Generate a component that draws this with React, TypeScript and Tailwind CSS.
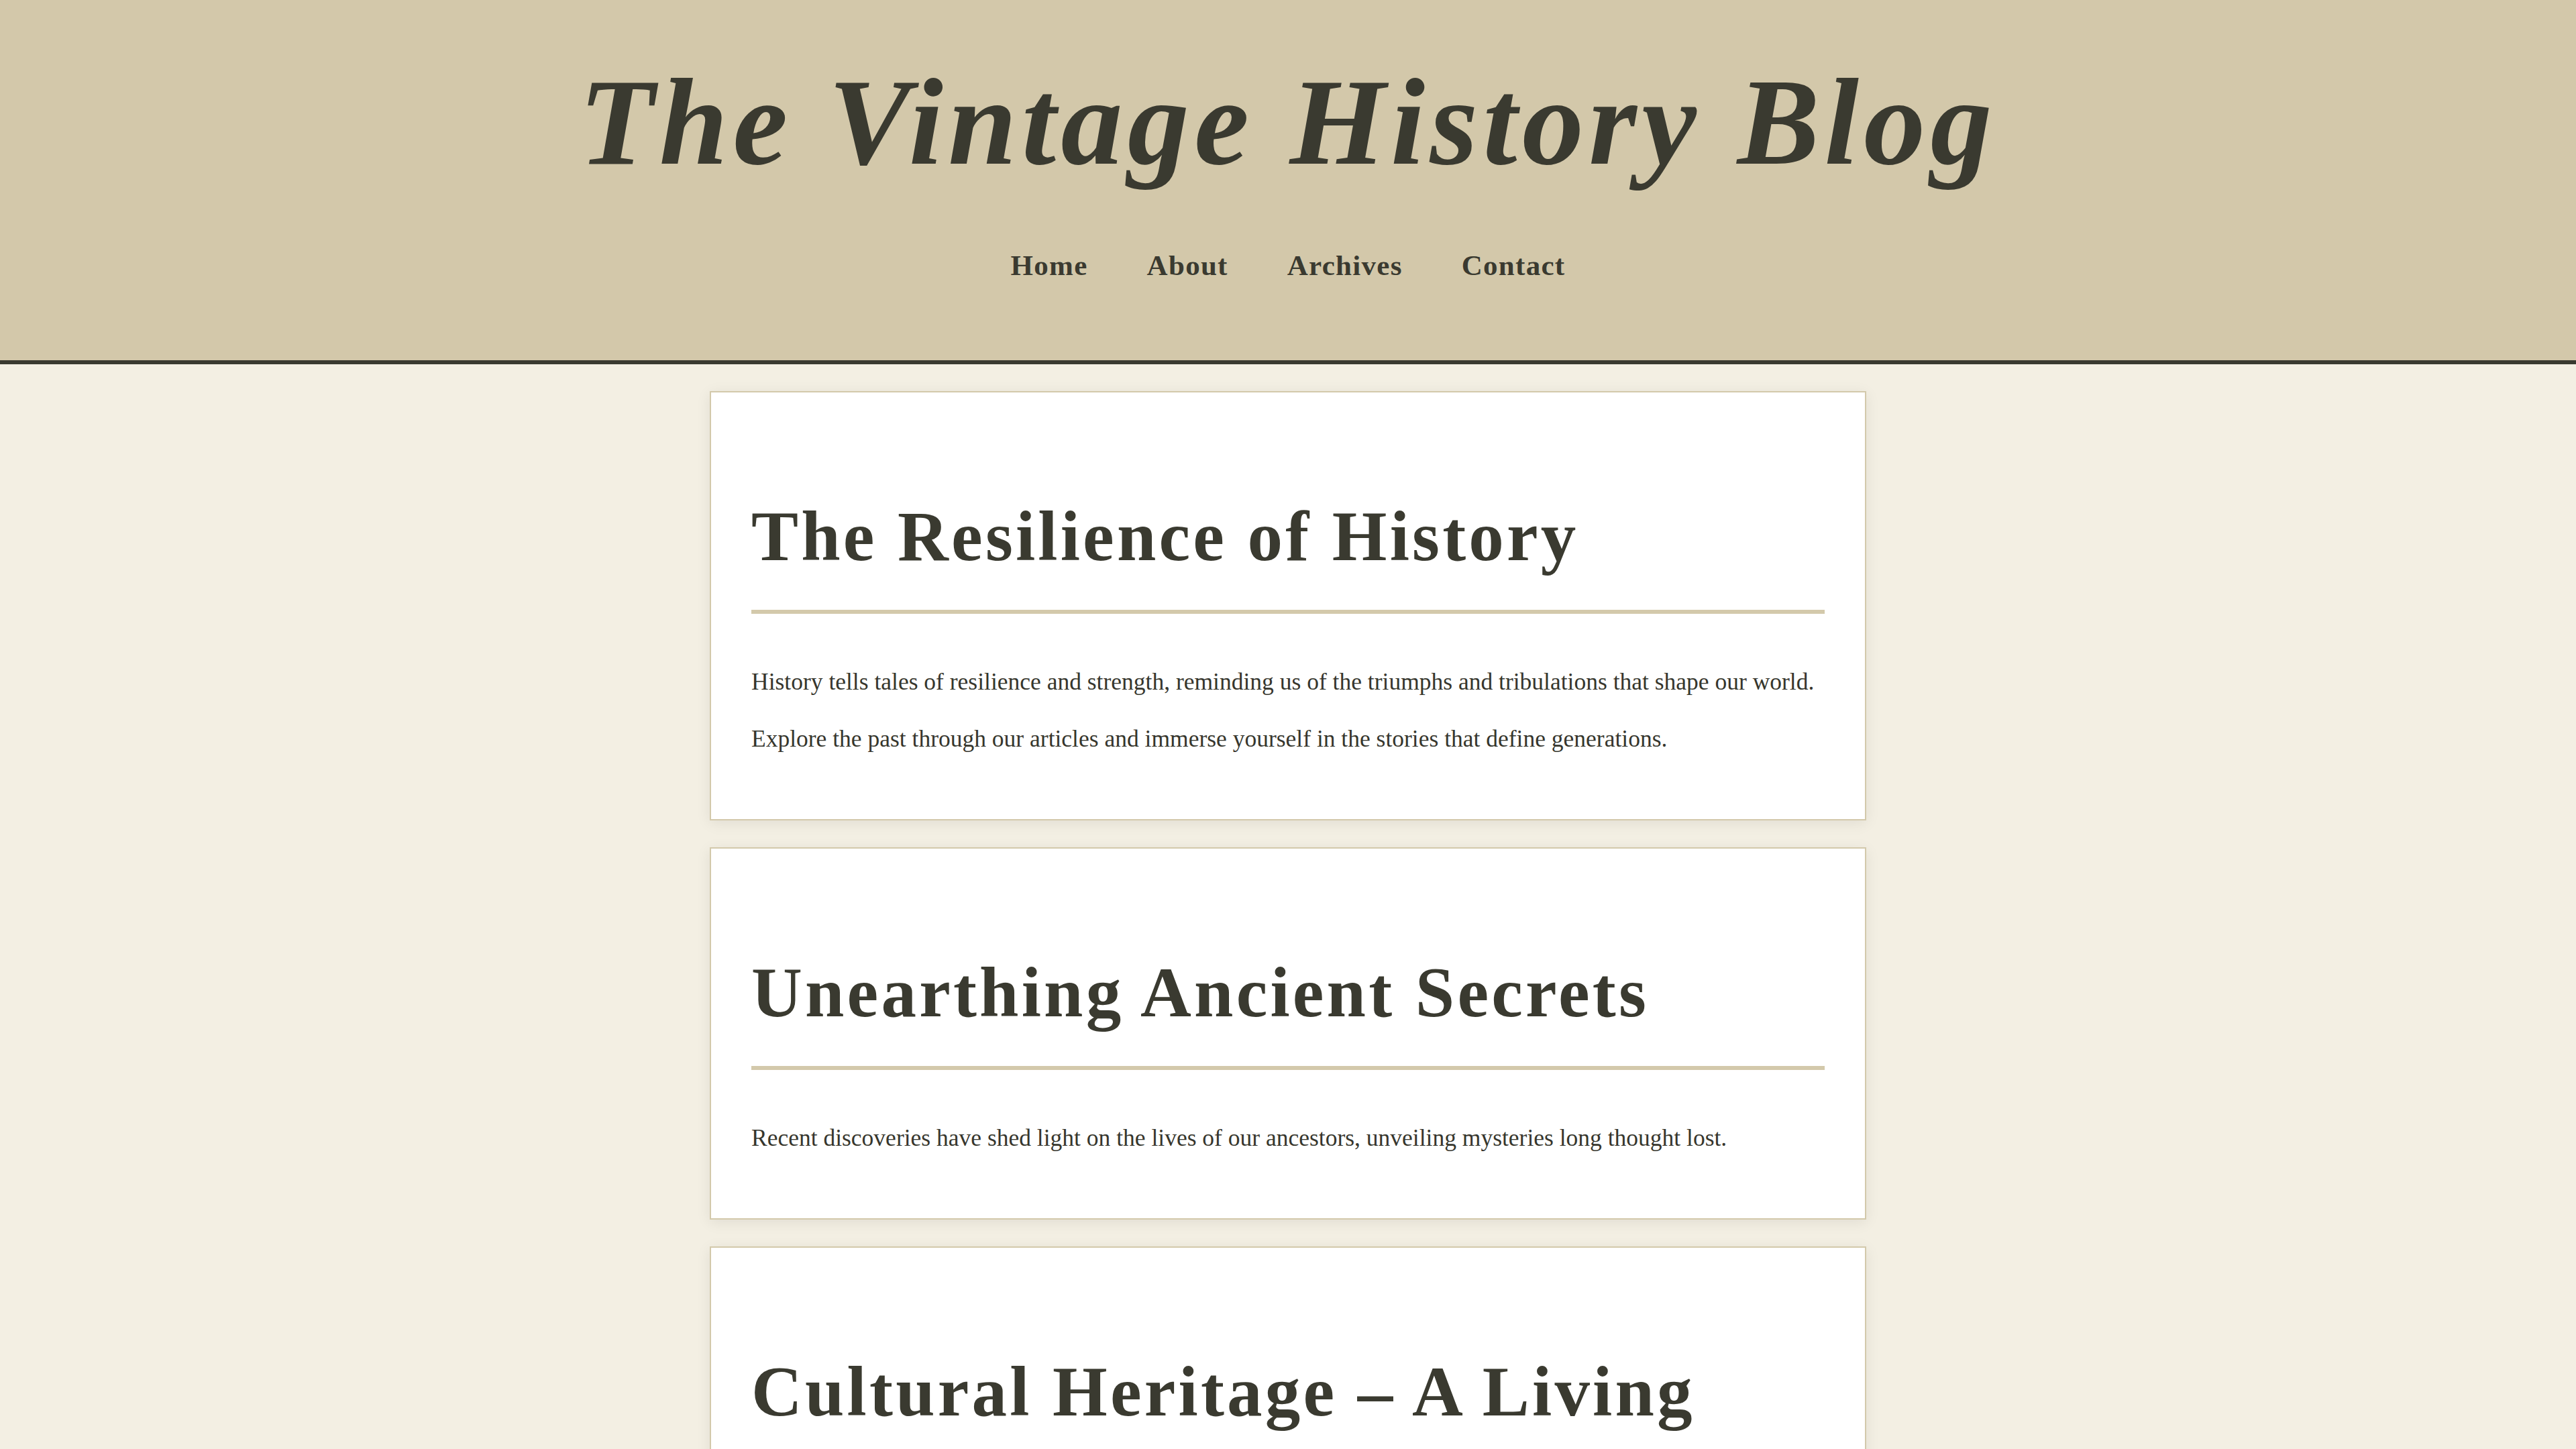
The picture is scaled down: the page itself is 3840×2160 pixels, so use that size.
import React from "react";

const posts = [
  {
    title: "The Resilience of History",
    paras: [
      "History tells tales of resilience and strength, reminding us of the triumphs and tribulations that shape our world.",
      "Explore the past through our articles and immerse yourself in the stories that define generations.",
    ],
  },
  {
    title: "Unearthing Ancient Secrets",
    paras: [
      "Recent discoveries have shed light on the lives of our ancestors, unveiling mysteries long thought lost.",
    ],
  },
  {
    title: "Cultural Heritage – A Living Tapestry",
    paras: [
      "Traditions, crafts and customs carry the memory of communities, weaving the threads of yesterday into the fabric of today.",
    ],
  },
];

export default function App() {
  return (
    <div className="min-h-screen bg-[#f3efe3] font-['Liberation_Serif','Times_New_Roman',serif] text-[#3a3a30]">
      <header className="bg-[#d3c8aa] border-b-[6px] border-[#3a3a30] pt-[90px] pb-[120px] text-center">
        <h1 className="italic font-bold text-[184px] leading-none tracking-[0.04em]">The Vintage History Blog</h1>
        <nav className="mt-[100px] flex justify-center gap-[88px] font-bold text-[43px] leading-none tracking-[0.03em]">
          <a href="#">Home</a>
          <a href="#">About</a>
          <a href="#">Archives</a>
          <a href="#">Contact</a>
        </nav>
      </header>
      <main className="flex flex-col items-center gap-[40px] pt-[40px] pb-[40px]">
        {posts.map((p) => (
          <article
            key={p.title}
            className="w-[1724px] bg-white border-2 border-[#d3c9ab] shadow-[0_4px_20px_rgba(0,0,0,0.08)] px-[60px] pt-[60px] pb-[93px]"
          >
            <h2 className="mt-[81px] font-bold text-[105px] leading-[1.4] tracking-[0.04em]">{p.title}</h2>
            <div className="mt-[36px] h-[6px] bg-[#d3c9ab]" />
            <div className="mt-[74px] flex flex-col gap-[31px]">
              {p.paras.map((t) => (
                <p key={t} className="text-[35.5px] leading-[54px] text-[#36362d]">
                  {t}
                </p>
              ))}
            </div>
          </article>
        ))}
      </main>
    </div>
  );
}
